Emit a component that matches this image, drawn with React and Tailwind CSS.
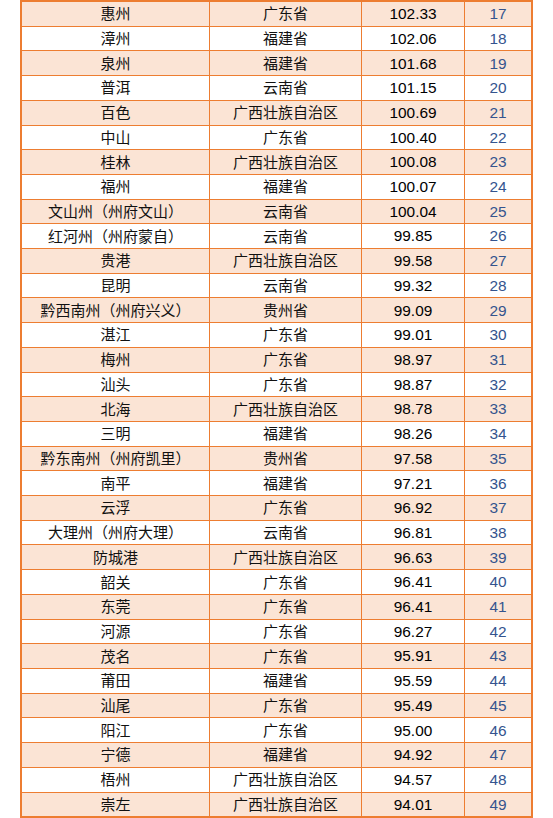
import React from "react";

const rows = [
  ["惠州", "广东省", "102.33", 17],
  ["漳州", "福建省", "102.06", 18],
  ["泉州", "福建省", "101.68", 19],
  ["普洱", "云南省", "101.15", 20],
  ["百色", "广西壮族自治区", "100.69", 21],
  ["中山", "广东省", "100.40", 22],
  ["桂林", "广西壮族自治区", "100.08", 23],
  ["福州", "福建省", "100.07", 24],
  ["文山州（州府文山）", "云南省", "100.04", 25],
  ["红河州（州府蒙自）", "云南省", "99.85", 26],
  ["贵港", "广西壮族自治区", "99.58", 27],
  ["昆明", "云南省", "99.32", 28],
  ["黔西南州（州府兴义）", "贵州省", "99.09", 29],
  ["湛江", "广东省", "99.01", 30],
  ["梅州", "广东省", "98.97", 31],
  ["汕头", "广东省", "98.87", 32],
  ["北海", "广西壮族自治区", "98.78", 33],
  ["三明", "福建省", "98.26", 34],
  ["黔东南州（州府凯里）", "贵州省", "97.58", 35],
  ["南平", "福建省", "97.21", 36],
  ["云浮", "广东省", "96.92", 37],
  ["大理州（州府大理）", "云南省", "96.81", 38],
  ["防城港", "广西壮族自治区", "96.63", 39],
  ["韶关", "广东省", "96.41", 40],
  ["东莞", "广东省", "96.41", 41],
  ["河源", "广东省", "96.27", 42],
  ["茂名", "广东省", "95.91", 43],
  ["莆田", "福建省", "95.59", 44],
  ["汕尾", "广东省", "95.49", 45],
  ["阳江", "广东省", "95.00", 46],
  ["宁德", "福建省", "94.92", 47],
  ["梧州", "广西壮族自治区", "94.57", 48],
  ["崇左", "广西壮族自治区", "94.01", 49],
];

export default function App() {
  return (
    <div className="w-[553px] h-[818px] bg-white">
      <div
        className="ml-[20px] w-[513px] h-[818px] border-2 border-[#ED7D31] flex flex-col text-[15px] text-[#111]"
        style={{ fontFamily: '"Liberation Sans", "Noto Sans CJK SC", sans-serif' }}
      >
        {rows.map((r, i) => (
          <div
            key={r[3]}
            className={
              "flex-1 flex items-stretch border-[#ED7D31] " +
              (i > 0 ? "border-t " : "") +
              (i % 2 === 0 ? "bg-[#FBE4D5]" : "bg-white")
            }
          >
            <div className="w-[187px] flex items-center justify-center leading-none whitespace-nowrap">
              {r[0]}
            </div>
            <div className="w-[152px] border-l border-[#ED7D31] flex items-center justify-center leading-none whitespace-nowrap">
              {r[1]}
            </div>
            <div className="w-[103px] border-l border-[#ED7D31] flex items-center justify-center leading-none text-black text-[15.4px]">
              {r[2]}
            </div>
            <div className="flex-1 border-l border-[#ED7D31] flex items-center justify-center leading-none text-[#34548E] text-[15.4px]">
              {r[3]}
            </div>
          </div>
        ))}
      </div>
    </div>
  );
}
